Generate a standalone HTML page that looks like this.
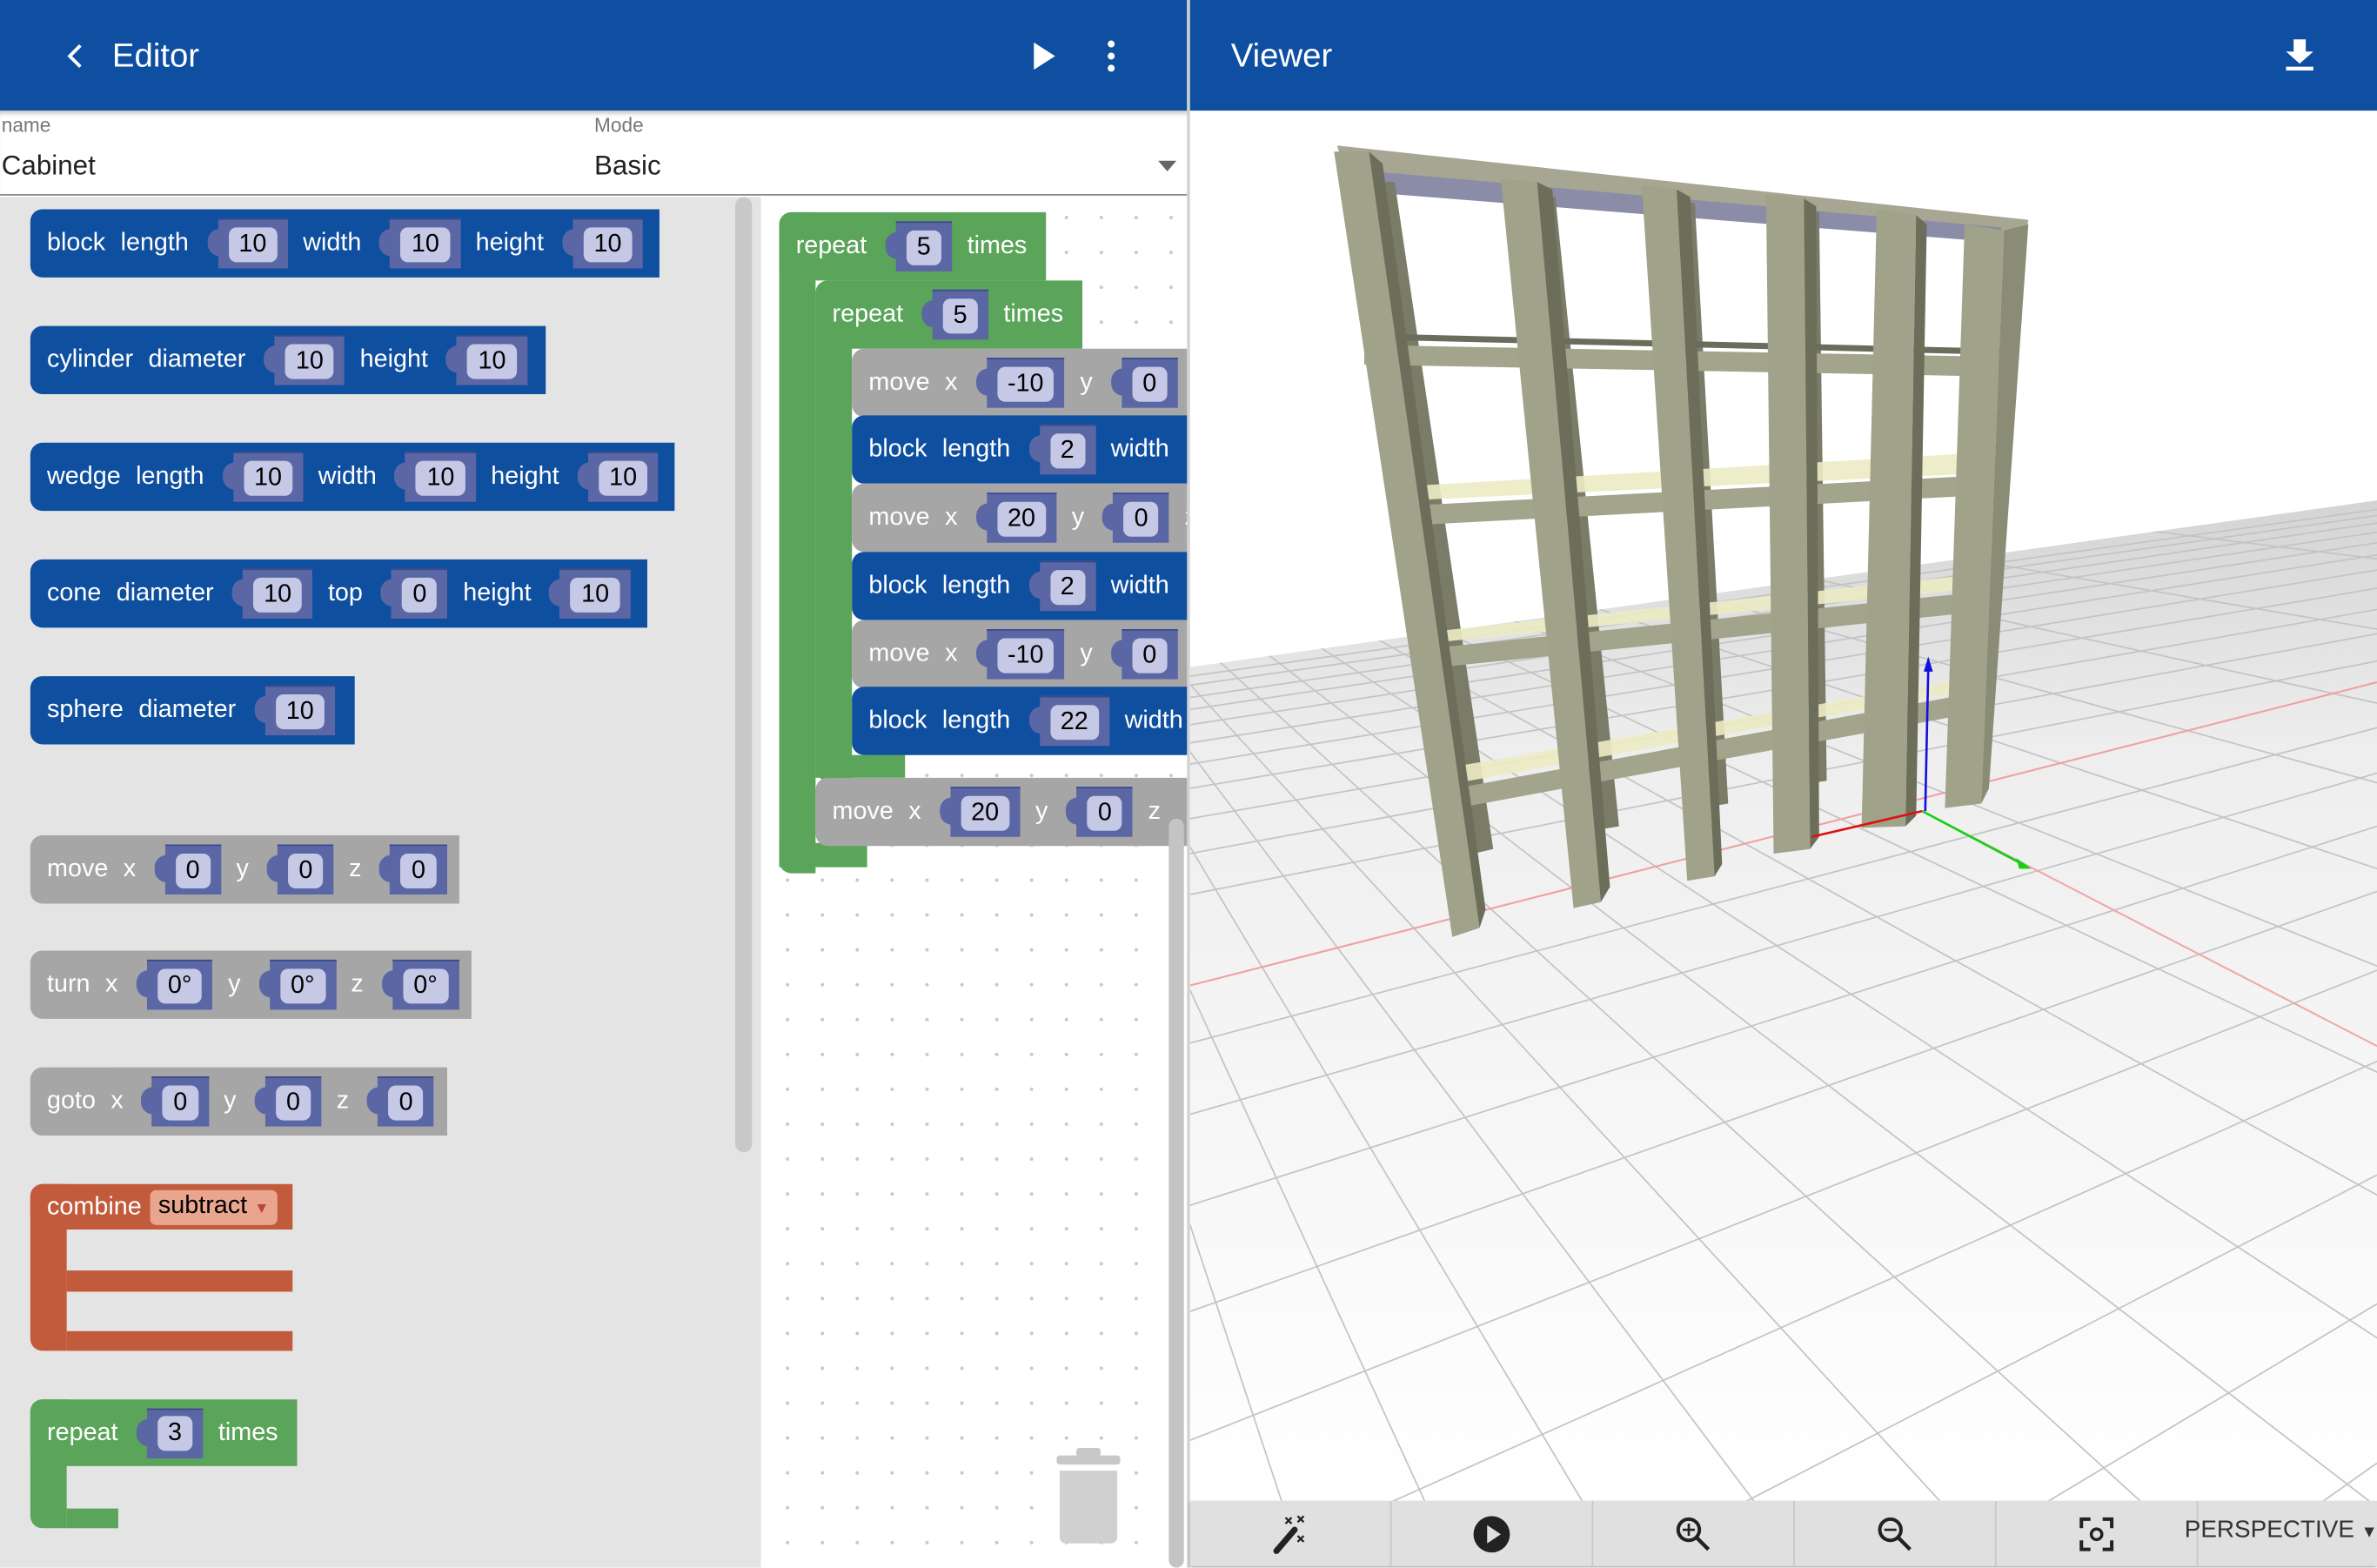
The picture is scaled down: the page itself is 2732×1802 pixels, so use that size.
<!DOCTYPE html>
<html><head><meta charset="utf-8"><style>
*{margin:0;padding:0;box-sizing:border-box}
html,body{width:2732px;height:1802px;overflow:hidden;background:#fff}
#root{position:absolute;left:0;top:0;width:1568px;height:1034px;transform:scale(1.74235);transform-origin:0 0;font-family:"Liberation Sans",sans-serif;overflow:hidden}
.hdr{position:absolute;top:0;height:73px;background:#0e4fa1;color:#fff}
.hdr .t{position:absolute;top:24px;font-size:22px}
.fly{position:absolute;left:0;top:130px;width:502px;height:904px;background:#e4e4e4}
.ws{position:absolute;left:502px;top:130px;width:281px;height:904px;background-color:#fff;background-image:radial-gradient(circle,#c8c8c8 1px,transparent 1.3px);background-size:23px 23px;background-position:6px 2px;overflow:hidden}
.b{position:absolute;height:45px;display:flex;align-items:center;padding-left:11px;color:#fff;font-size:16.5px;border-radius:8px 0 0 8px;white-space:nowrap}
.b>span{margin-right:10px}
.blue{background:#0f4fa0}.grey{background:#a6a6a6}.green{background:#5ba55b}.red{background:#c25a3c}
.in{font-style:normal;display:inline-flex;align-items:center;height:33px;background:#5b67a5;padding:0 7px;margin:0 10px 0 9px;position:relative;border-top:1px solid #3d4a8a}
.in::before{content:"";position:absolute;left:-7px;top:6px;width:8px;height:18px;background:#5b67a5;border-radius:8px 0 0 8px}
.in b{font-weight:normal;font-style:normal;background:#c5c9e6;color:#000;border-radius:5px;padding:0 7px;line-height:23px}
.tb{position:absolute;left:785px;top:990px;width:783px;height:43px;background:#e0e0e0;box-shadow:0 1px 2px #999}
.tb .c{position:absolute;top:0;height:43px;width:133px;border-right:1px solid #c8c8c8;display:flex;align-items:center;justify-content:center}
</style></head><body><div id="root">

<div class="hdr" style="left:0;width:783px">
 <svg style="position:absolute;left:40px;top:27px" width="20" height="20" viewBox="0 0 20 20"><polyline points="13,3 6,10 13,17" fill="none" stroke="#fff" stroke-width="2.2"/></svg>
 <div class="t" style="left:74px">Editor</div>
 <svg style="position:absolute;left:680px;top:27px" width="18" height="20"><polygon points="2,1 16,10 2,19" fill="#fff"/></svg>
 <svg style="position:absolute;left:728px;top:26px" width="10" height="22"><circle cx="5" cy="3" r="2.3" fill="#fff"/><circle cx="5" cy="11" r="2.3" fill="#fff"/><circle cx="5" cy="19" r="2.3" fill="#fff"/></svg>
</div>
<div style="position:absolute;left:783px;top:0;width:2px;height:1034px;background:#d0d0d0"></div>
<div class="hdr" style="left:785px;width:783px">
 <div class="t" style="left:27px">Viewer</div>
 <svg style="position:absolute;left:722px;top:25px" width="20" height="22"><polygon points="6,1 14,1 14,9 19,9 10,17 1,9 6,9" fill="#fff"/><rect x="1" y="19" width="18" height="2.5" fill="#fff"/></svg>
</div>

<div style="position:absolute;left:0;top:73px;width:783px;height:56px;background:#fff;border-bottom:1.5px solid #888;box-shadow:inset 0 4px 4px -3px #aaa"></div>
<div style="position:absolute;left:1px;top:75px;font-size:13px;color:#777">name</div>
<div style="position:absolute;left:1px;top:99px;font-size:18px;color:#222">Cabinet</div>
<div style="position:absolute;left:392px;top:75px;font-size:13px;color:#777">Mode</div>
<div style="position:absolute;left:392px;top:99px;font-size:18px;color:#222">Basic</div>
<div style="position:absolute;left:764px;top:106px;width:0;height:0;border-left:6px solid transparent;border-right:6px solid transparent;border-top:7px solid #666"></div>

<div class="fly"></div>
<div style="position:absolute;left:485px;top:130px;width:11px;height:630px;background:#c8c8c8;border-radius:6px"></div>

<div class="b blue" style="left:20px;top:138px;width:415px"><span>block</span><span>length</span><i class="in"><b>10</b></i><span>width</span><i class="in"><b>10</b></i><span>height</span><i class="in"><b>10</b></i></div>
<div class="b blue" style="left:20px;top:215px;width:340px"><span>cylinder</span><span>diameter</span><i class="in"><b>10</b></i><span>height</span><i class="in"><b>10</b></i></div>
<div class="b blue" style="left:20px;top:292px;width:425px"><span>wedge</span><span>length</span><i class="in"><b>10</b></i><span>width</span><i class="in"><b>10</b></i><span>height</span><i class="in"><b>10</b></i></div>
<div class="b blue" style="left:20px;top:369px;width:407px"><span>cone</span><span>diameter</span><i class="in"><b>10</b></i><span>top</span><i class="in"><b>0</b></i><span>height</span><i class="in"><b>10</b></i></div>
<div class="b blue" style="left:20px;top:446px;width:214px"><span>sphere</span><span>diameter</span><i class="in"><b>10</b></i></div>
<div class="b grey" style="left:20px;top:551px;width:283px"><span>move</span><span>x</span><i class="in"><b>0</b></i><span>y</span><i class="in"><b>0</b></i><span>z</span><i class="in"><b>0</b></i></div>
<div class="b grey" style="left:20px;top:627px;width:291px"><span>turn</span><span>x</span><i class="in"><b>0°</b></i><span>y</span><i class="in"><b>0°</b></i><span>z</span><i class="in"><b>0°</b></i></div>
<div class="b grey" style="left:20px;top:704px;width:275px"><span>goto</span><span>x</span><i class="in"><b>0</b></i><span>y</span><i class="in"><b>0</b></i><span>z</span><i class="in"><b>0</b></i></div>

<div style="position:absolute;left:20px;top:781px;width:24px;height:110px;background:#c25a3c;border-radius:8px 0 0 8px"></div>
<div class="b red" style="left:20px;top:781px;width:173px;height:30px"><span style="margin-right:6px">combine</span><span style="background:#eaa58e;color:#000;border-radius:4px;padding:0 5px;line-height:20px">subtract <span style="font-size:10px;color:#b44">▼</span></span></div>
<div style="position:absolute;left:44px;top:838px;width:149px;height:14px;background:#c25a3c"></div>
<div style="position:absolute;left:44px;top:878px;width:149px;height:13px;background:#c25a3c"></div>

<div style="position:absolute;left:20px;top:923px;width:24px;height:85px;background:#5ba55b;border-radius:8px 0 0 8px"></div>
<div class="b green" style="left:20px;top:923px;width:176px;height:44px"><span>repeat</span><i class="in"><b>3</b></i><span>times</span></div>
<div style="position:absolute;left:44px;top:995px;width:34px;height:13px;background:#5ba55b"></div>

<div class="ws">
 <div style="position:absolute;left:12px;top:10px;width:24px;height:436px;background:#5ba55b;border-radius:8px 0 0 8px"></div>
 <div style="position:absolute;left:12px;top:426px;width:58px;height:16px;background:#5ba55b"></div>
 <div class="b green" style="left:12px;top:10px;width:176px"><span>repeat</span><i class="in"><b>5</b></i><span>times</span></div>
 <div style="position:absolute;left:36px;top:55px;width:24px;height:330px;background:#5ba55b;border-radius:8px 0 0 8px"></div>
 <div style="position:absolute;left:36px;top:368px;width:59px;height:15px;background:#5ba55b"></div>
 <div class="b green" style="left:36px;top:55px;width:176px"><span>repeat</span><i class="in"><b>5</b></i><span>times</span></div>
 <div class="b grey" style="left:60px;top:100px;width:300px"><span>move</span><span>x</span><i class="in"><b>-10</b></i><span>y</span><i class="in"><b>0</b></i><span>z</span></div>
 <div class="b blue" style="left:60px;top:144px;width:300px"><span>block</span><span>length</span><i class="in"><b>2</b></i><span>width</span><i class="in"><b>2</b></i></div>
 <div class="b grey" style="left:60px;top:189px;width:300px"><span>move</span><span>x</span><i class="in"><b>20</b></i><span>y</span><i class="in"><b>0</b></i><span>z</span></div>
 <div class="b blue" style="left:60px;top:234px;width:300px"><span>block</span><span>length</span><i class="in"><b>2</b></i><span>width</span><i class="in"><b>2</b></i></div>
 <div class="b grey" style="left:60px;top:279px;width:300px"><span>move</span><span>x</span><i class="in"><b>-10</b></i><span>y</span><i class="in"><b>0</b></i><span>z</span></div>
 <div class="b blue" style="left:60px;top:323px;width:300px"><span>block</span><span>length</span><i class="in"><b>22</b></i><span>width</span></div>
 <div class="b grey" style="left:36px;top:383px;width:300px"><span>move</span><span>x</span><i class="in"><b>20</b></i><span>y</span><i class="in"><b>0</b></i><span>z</span></div>
 <div style="position:absolute;left:195px;top:830px;width:42px;height:6px;background:#c8c8c8;border-radius:2px"></div>
 <div style="position:absolute;left:208px;top:825px;width:16px;height:6px;background:#c8c8c8;border-radius:2px"></div>
 <div style="position:absolute;left:197px;top:840px;width:38px;height:48px;background:#d0d0d0;border-radius:0 0 4px 4px"></div>
 <div style="position:absolute;left:269px;top:410px;width:10px;height:494px;background:#c4c4c4;border-radius:5px"></div>
</div>

<svg style="position:absolute;left:785px;top:73px" width="783" height="917" viewBox="785 73 783 917">
 <defs>
  <clipPath id="fl"><polygon points="785,440 1568,330 1568,990 785,990"/></clipPath>
  <linearGradient id="fg" x1="0" y1="0" x2="0" y2="1"><stop offset="0" stop-color="#d4d4d4"/><stop offset="0.25" stop-color="#eeeeee"/><stop offset="1" stop-color="#fff"/></linearGradient>
 </defs>
 <rect x="785" y="73" width="783" height="917" fill="#fff"/>
 <g clip-path="url(#fl)">
  <polygon points="785,440 1568,330 1568,990 785,990" fill="url(#fg)"/>
  <g stroke="#c4c4c4" stroke-width="1" fill="none">
   <line x1="785" y1="446" x2="1568" y2="336"/><line x1="785" y1="452" x2="1568" y2="340"/>
   <line x1="785" y1="460" x2="1568" y2="345"/><line x1="785" y1="468" x2="1568" y2="351"/>
   <line x1="785" y1="478" x2="1568" y2="358"/><line x1="785" y1="490" x2="1568" y2="366"/>
   <line x1="785" y1="504" x2="1568" y2="376"/><line x1="785" y1="520" x2="1568" y2="388"/>
   <line x1="785" y1="540" x2="1568" y2="402"/><line x1="785" y1="563" x2="1568" y2="418"/>
   <line x1="785" y1="590" x2="1568" y2="436"/><line x1="785" y1="688" x2="1568" y2="480"/>
   <line x1="785" y1="735" x2="1568" y2="510"/><line x1="785" y1="795" x2="1568" y2="545"/>
   <line x1="785" y1="865" x2="1568" y2="588"/><line x1="785" y1="950" x2="1568" y2="640"/>
   <line x1="785" y1="1050" x2="1568" y2="700"/><line x1="785" y1="1180" x2="1568" y2="775"/>
   <line x1="785" y1="1330" x2="1568" y2="860"/><line x1="785" y1="1520" x2="1568" y2="965"/>
   <line x1="600" y1="250" x2="760" y2="1034"/><line x1="600" y1="250" x2="860" y2="1034"/>
   <line x1="600" y1="250" x2="960" y2="1034"/><line x1="600" y1="250" x2="1070" y2="1034"/>
   <line x1="600" y1="250" x2="1190" y2="1034"/><line x1="600" y1="250" x2="1320" y2="1034"/>
   <line x1="600" y1="250" x2="1460" y2="1034"/><line x1="600" y1="250" x2="1620" y2="1034"/>
   <line x1="600" y1="250" x2="1800" y2="1034"/><line x1="600" y1="250" x2="2010" y2="1034"/>
   <line x1="600" y1="250" x2="2260" y2="1034"/><line x1="600" y1="250" x2="2560" y2="1034"/>
   <line x1="600" y1="250" x2="2950" y2="1034"/><line x1="600" y1="250" x2="3450" y2="1034"/>
   <line x1="600" y1="250" x2="4150" y2="1034"/><line x1="600" y1="250" x2="5200" y2="1034"/>
   <line x1="600" y1="250" x2="7000" y2="1034"/>
  </g>
  <line x1="785" y1="650" x2="1568" y2="450" stroke="#f0a0a0" stroke-width="1.2"/>
  <line x1="1268" y1="535" x2="1568" y2="690" stroke="#f0a8a8" stroke-width="1.2"/>
 </g>
 <!-- shelf -->
 <polygon points="882,96 1338,145 1335,162 888,116" fill="#a6a692"/>
 <polygon points="905,113 1320,150 1320,160 905,127" fill="#8a8ca8"/>
 <!-- back uprights -->
 <g fill="#7a7c68">
  <polygon points="905,120 920,120 985,560 972,563"/>
  <polygon points="1012,128 1026,130 1068,545 1056,547"/>
  <polygon points="1104,132 1118,134 1140,530 1128,532"/>
  <polygon points="1186,138 1200,140 1205,515 1192,517"/>
 </g>
 <g fill="#ecebc4" opacity="0.9">
  <polygon points="930,330 1310,312 1318,298 940,320"/>
  <polygon points="945,424 1305,388 1312,378 950,416"/>
  <polygon points="958,517 1300,455 1308,446 963,505"/>
 </g>
 <line x1="905" y1="222" x2="1320" y2="232" stroke="#6a6c5c" stroke-width="4"/>
 <g stroke="#a2a48c" stroke-width="13">
  <line x1="900" y1="234" x2="1325" y2="242"/>
  <line x1="930" y1="340" x2="1310" y2="320"/>
  <line x1="945" y1="434" x2="1305" y2="397"/>
  <line x1="958" y1="527" x2="1300" y2="464"/>
 </g>
 <g fill="#a0a28a">
  <polygon points="880,100 903,100 976,612 958,618"/>
  <polygon points="990,118 1014,120 1056,595 1038,599"/>
  <polygon points="1083,122 1106,125 1131,578 1113,581"/>
  <polygon points="1165,128 1190,131 1194,560 1170,563"/>
  <polygon points="1238,138 1264,142 1257,545 1228,546"/>
  <polygon points="1296,148 1322,152 1307,530 1283,533"/>
 </g>
 <g fill="#6c6e5a">
  <polygon points="903,100 912,108 980,600 976,612"/>
  <polygon points="1014,120 1024,125 1062,585 1056,595"/>
  <polygon points="1106,125 1115,130 1136,570 1131,578"/>
  <polygon points="1190,131 1198,136 1200,552 1194,560"/>
  <polygon points="1264,142 1271,148 1264,538 1257,545"/>
 </g>
 <polygon points="1322,152 1338,148 1312,520 1307,530" fill="#8a8c76"/>
 <line x1="1270" y1="535" x2="1272" y2="440" stroke="#1010e0" stroke-width="1.5"/>
 <polygon points="1272,433 1269,443 1275,443" fill="#1010e0"/>
 <line x1="1268" y1="535" x2="1195" y2="552" stroke="#e01010" stroke-width="1.5"/>
 <line x1="1268" y1="535" x2="1336" y2="571" stroke="#10d010" stroke-width="1.5"/>
 <polygon points="1340,573 1330,566 1332,573" fill="#10d010"/>
</svg>

<div class="tb">
 <div class="c" style="left:0"><svg width="30" height="30" viewBox="0 0 30 30"><line x1="6" y1="26" x2="18" y2="12" stroke="#222" stroke-width="4" stroke-linecap="round"/><g stroke="#222" stroke-width="1.3"><path d="M12 4l4 4M16 4l-4 4M20 3l4 4M24 3l-4 4M20 16l4 4M24 16l-4 4"/></g></svg></div>
 <div class="c" style="left:133px"><svg width="26" height="26"><circle cx="13" cy="13" r="12" fill="#222"/><polygon points="10,7 19,13 10,19" fill="#e0e0e0"/></svg></div>
 <div class="c" style="left:266px"><svg width="26" height="26"><circle cx="10" cy="10" r="7" fill="none" stroke="#222" stroke-width="2.3"/><line x1="15" y1="15" x2="23" y2="23" stroke="#222" stroke-width="2.5"/><path d="M10 6v8M6 10h8" stroke="#222" stroke-width="1.5"/></svg></div>
 <div class="c" style="left:399px"><svg width="26" height="26"><circle cx="10" cy="10" r="7" fill="none" stroke="#222" stroke-width="2.3"/><line x1="15" y1="15" x2="23" y2="23" stroke="#222" stroke-width="2.5"/><path d="M6 10h8" stroke="#222" stroke-width="1.5"/></svg></div>
 <div class="c" style="left:532px"><svg width="24" height="24"><path d="M2 8V2h6M16 2h6v6M22 16v6h-6M8 22H2v-6" fill="none" stroke="#222" stroke-width="2.3"/><circle cx="12" cy="12" r="3.5" fill="none" stroke="#222" stroke-width="2"/></svg></div>
 <div style="position:absolute;left:656px;top:11px;font-size:16px;color:#333;white-space:nowrap">PERSPECTIVE <span style="font-size:11px">▼</span></div>
</div>

</div></body></html>
